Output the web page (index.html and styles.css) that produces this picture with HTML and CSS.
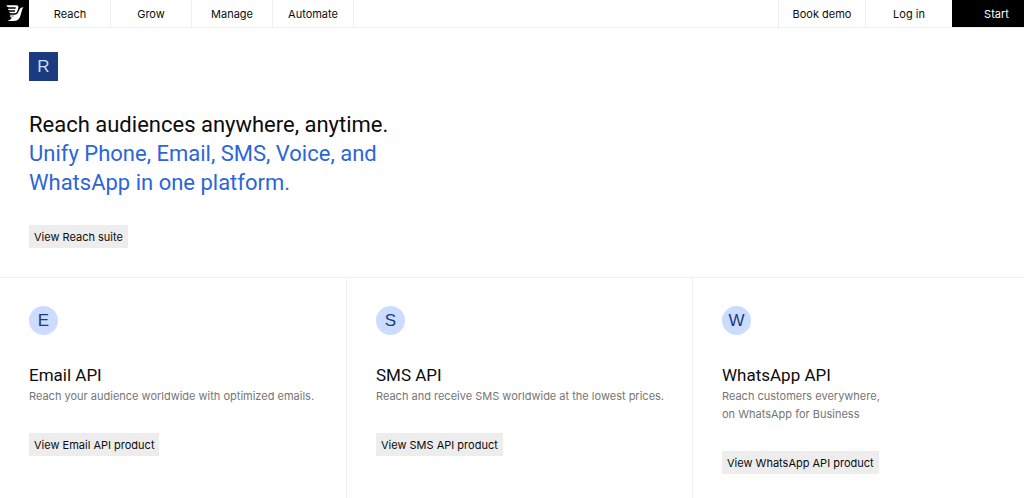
FILE: index.html
```html
<!DOCTYPE html>
<html lang="en">
<head>
<meta charset="utf-8">
<meta name="viewport" content="width=device-width, initial-scale=1">
<title>Reach suite</title>
<link rel="stylesheet" href="styles.css">
</head>
<body>
<header class="topbar">
  <a class="logo" href="#" aria-label="Home">
    <svg class="logo-mark" viewBox="0 0 54 50" aria-hidden="true">
      <path d="M1 1H31Q38 1 37 8L34 19Q32 25 26 25H17Q11 25 9 20H27V16H13Q7 16 5 11H29V7H8Q3 7 1 1ZM10 29H27Q34 29 37 22L40 14Q43 7 53 7Q49 10 48 16L43 33Q39 48 23 48H4Q13 45 18 38Q12 38 11 34H24V32H16Q12 32 10 29Z"/>
    </svg>
  </a>
  <nav class="nav" aria-label="Products">
    <a class="nav-link" href="#">Reach</a>
    <a class="nav-link" href="#">Grow</a>
    <a class="nav-link" href="#">Manage</a>
    <a class="nav-link" href="#">Automate</a>
  </nav>
  <nav class="account" aria-label="Account">
    <a class="account-link" href="#">Book demo</a>
    <a class="account-link" href="#">Log in</a>
    <a class="account-link start" href="#">Start</a>
  </nav>
</header>
<main>
  <section class="hero">
    <span class="badge badge-square" aria-hidden="true">R</span>
    <h1 class="hero-title">Reach audiences anywhere, anytime.
      <span class="accent">Unify Phone, Email, SMS, Voice, and WhatsApp in one platform.</span></h1>
    <a class="button" href="#">View Reach suite</a>
  </section>
  <section class="products">
    <article class="product">
      <span class="badge badge-round" aria-hidden="true">E</span>
      <h2 class="product-title">Email API</h2>
      <p class="product-text">Reach your audience worldwide with optimized emails.</p>
      <a class="button" href="#">View Email API product</a>
    </article>
    <article class="product">
      <span class="badge badge-round" aria-hidden="true">S</span>
      <h2 class="product-title">SMS API</h2>
      <p class="product-text">Reach and receive SMS worldwide at the lowest prices.</p>
      <a class="button" href="#">View SMS API product</a>
    </article>
    <article class="product">
      <span class="badge badge-round" aria-hidden="true">W</span>
      <h2 class="product-title">WhatsApp API</h2>
      <p class="product-text">Reach customers everywhere,<br>on WhatsApp for Business</p>
      <a class="button" href="#">View WhatsApp API product</a>
    </article>
  </section>
</main>
</body>
</html>
```
FILE: styles.css
```css
:root {
  --line: #efefef;
  --gutter: 29px;
  --display: Roboto, "Liberation Sans", sans-serif;
}

* {
  box-sizing: border-box;
}

body {
  display: flex;
  flex-direction: column;
  min-height: 100vh;
  margin: 0;
  background: #fff;
  color: #0c0c0c;
  font: 11px/18px Inter, "Liberation Sans", sans-serif;
}

a {
  color: inherit;
  text-decoration: none;
}

main {
  display: flex;
  flex: 1;
  flex-direction: column;
}

.topbar {
  display: flex;
  height: 28px;
  border-bottom: 1px solid var(--line);
}

.logo {
  display: grid;
  place-items: center;
  width: 29px;
  background: #000;
}

.logo-mark {
  width: 18px;
  fill: #fff;
}

.nav,
.account {
  display: flex;
}

.nav {
  padding-left: 1px;
}

.account {
  margin-left: auto;
}

.nav-link,
.account-link {
  display: grid;
  place-items: center;
}

.nav-link {
  min-width: 81px;
  border-right: 1px solid var(--line);
}

.account-link {
  min-width: 87px;
  border-left: 1px solid var(--line);
}

.account-link.start {
  min-width: 72px;
  padding-left: 16px;
  border-color: #000;
  background: #000;
  color: #fff;
}

.hero,
.product {
  display: flex;
  flex-direction: column;
  align-items: flex-start;
}

.hero {
  padding: 24px var(--gutter) 29px;
}

.badge {
  display: grid;
  place-items: center;
  width: 29px;
  height: 29px;
  font-family: "Liberation Sans", Arial, sans-serif;
  font-size: 17px;
}

.badge-square {
  background: #1b3b80;
  color: #ccdcff;
}

.badge-round {
  border-radius: 50%;
  background: #ccdcff;
  color: #1b3b80;
}

.hero-title {
  max-width: 380px;
  margin: 29px 0 28px;
  font-family: var(--display);
  font-size: 22px;
  font-weight: 400;
  line-height: 29px;
}

.accent {
  display: block;
  color: #2c66d6;
}

.button {
  padding: 3px 5px 2px;
  background: #ededed;
}

.products {
  display: grid;
  flex: 1;
  grid-template-columns: 347fr 346fr 331fr;
  border-top: 1px solid var(--line);
}

.product {
  padding: 28px 0 12px var(--gutter);
  border-right: 1px solid var(--line);
}

.product:last-child {
  border-right: 0;
}

.product-title {
  margin: 29px 0 0;
  font-family: var(--display);
  font-size: 17px;
  font-weight: 400;
  line-height: 23px;
}

.product-text {
  margin: 0 0 28px;
  color: #757575;
}
```
